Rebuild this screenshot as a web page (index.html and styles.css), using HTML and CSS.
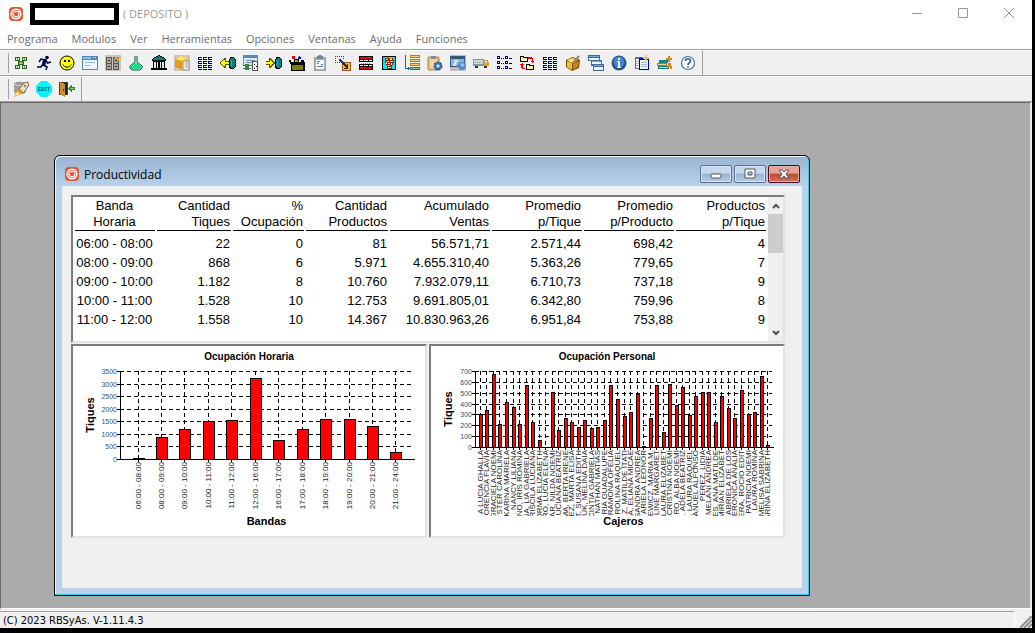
FILE: index.html
```html
<!DOCTYPE html>
<html lang="es">
<head>
    <meta charset="UTF-8">
    <meta name="viewport" content="width=device-width, initial-scale=1.0">
    <title>Productividad</title>
    <link rel="stylesheet" href="styles.css">
</head>
<body>
    <svg class="defs" aria-hidden="true">
        <symbol id="logo" viewBox="0 0 16 16">
            <rect x="1" y="1" width="14" height="14" rx="4" fill="#dd5a32"/>
            <circle cx="8" cy="8" r="4.800" fill="#e88060" stroke="#fff" stroke-width="1.500"/>
            <path d="M5 8l1.500-2.500h3L11 8l-1.500 2.500h-3z" fill="#dd5a32" stroke="#fff" stroke-width="1"/>
            <path d="M2 8h3M10 6l1.500-2.500M10 10l1.500 2.500" stroke="#f7d5c9"/>
        </symbol>
        <symbol id="grid" viewBox="0 0 16 16">
            <path d="M2 2h5v4H2zM9 2h5v4H9zM2 10h5v4H2zM9 10h5v4H9zM5 6h6v4H5z" fill="#2c6a26"/>
            <path d="M3 3h3v2H3zM10 3h3v2h-3zM3 11h3v2H3zM10 11h3v2h-3z" fill="#d5edc8"/>
            <path d="M4 3h1v2H4zM11 3h1v2h-1zM4 11h1v2H4zM11 11h1v2h-1zM6 7h4v2H6z" fill="#62a850"/>
            <path d="M7 7h2v2H7z" fill="#f7b84b"/>
        </symbol>
        <symbol id="cells" viewBox="0 0 16 16">
            <path d="M1 2h4v1H1zM6 2h4v1H6zM11 2h4v1h-4zM1 6h4v1H1zM6 6h4v1H6zM11 6h4v1h-4zM1 10h4v1H1zM6 10h4v1H6zM11 10h4v1h-4z" fill="#0000c8"/>
            <path d="M1 4h4v1H1zM6 4h4v1H6zM11 4h4v1h-4zM1 8h4v1H1zM6 8h4v1H6zM11 8h4v1h-4zM1 12h4v1H1zM6 12h4v1H6zM11 12h4v1h-4zM1 14h4v1H1zM6 14h4v1H6zM11 14h4v1h-4z"/>
            <path d="M1 2h1v3H1zM6 2h1v3H6zM11 2h1v3h-1zM1 6h1v3H1zM6 6h1v3H6zM11 6h1v3h-1zM1 10h1v3H1zM6 10h1v3H6zM11 10h1v3h-1z" fill="#000060"/>
        </symbol>
        <symbol id="cylinder" viewBox="0 0 8 12">
            <path d="M2 0h4v1h1v1h1v8H7v1H6v1H2v-1H1V2h1z"/>
            <path d="M3 1h3v1h1v8H6v1H3v-1H2V2h1z" fill="#008080"/>
            <path d="M3 3h1v6H3z" fill="#3ca8a0"/>
        </symbol>
        <symbol id="clipboard" viewBox="0 0 16 16">
            <rect x="2" y="2" width="12" height="14" rx="1" fill="#a89f8c"/>
            <rect x="3" y="3" width="10" height="12" fill="#9cb4d0"/>
            <rect x="4" y="5" width="8" height="9" fill="#f4f9ff"/>
            <path d="M5 1h1l1-1h2l1 1h1v3H5z" fill="#6e86a6"/>
            <path d="M5 6h3v1H5zM5 8h2v1H5zM5 11h6v1H5zM9 9h2v1H9z" fill="#5f7fa6"/>
        </symbol>
    </svg>

    <div class="app">
        <header class="titlebar">
            <svg class="icon"><use href="#logo"/></svg>
            <span class="redacted"></span>
            <span>( DEPOSITO )</span>
            <div class="window-controls">
                <button aria-label="Minimizar"><svg viewBox="0 0 10 10"><path d="M0 5.500h10"/></svg></button>
                <button aria-label="Maximizar"><svg viewBox="0 0 10 10"><path d="M.5.5h9v9h-9z"/></svg></button>
                <button aria-label="Cerrar"><svg viewBox="0 0 10 10"><path d="M0 0l10 10M10 0L0 10"/></svg></button>
            </div>
        </header>

        <nav class="menu">
            <a href="#">Programa</a>
            <a href="#">Modulos</a>
            <a href="#">Ver</a>
            <a href="#">Herramientas</a>
            <a href="#">Opciones</a>
            <a href="#">Ventanas</a>
            <a href="#">Ayuda</a>
            <a href="#">Funciones</a>
        </nav>

        <div class="toolbar-row">
            <div class="toolbar">
                <button aria-label="Modulos"><svg class="icon px"><use href="#grid"/></svg></button>
                <button aria-label="Ejecutar"><svg class="icon" viewBox="0 0 16 16"><circle cx="11" cy="2.500" r="1.800" fill="#000030"/><path d="M10 5L5 4 3 7M10 5l1.500 3 3.500-1M8 5l-1 5 4 2-1 3M7 9l-2 3H1" fill="none" stroke="#000040" stroke-width="1.500"/><path d="M7 4h3.500l-1 6H6z" fill="#000040"/></svg></button>
                <button aria-label="Clientes"><svg class="icon" viewBox="0 0 16 16"><circle cx="8" cy="8" r="7" fill="#ff0" stroke="#000"/><path d="M5 5h2v2H5zM9 5h2v2H9z"/><path d="M4 9.500c1 3.500 7 3.500 8 0" fill="none" stroke="#000"/></svg></button>
                <button aria-label="Ventana"><svg class="icon px" viewBox="0 0 16 16"><path d="M0 1h16v14H0z" fill="#5585b8"/><path d="M1 5h14v9H1z" fill="#eef6fd"/><path d="M1 2h8v2H1z" fill="#8fc0e8"/><path d="M11 2h1v1h-1zM13 2h1v1h-1z" fill="#fff"/><path d="M3 7h10v1H3zM3 10h5v1H3z" fill="#9ab6d4"/></svg></button>
                <button aria-label="Archivos"><svg class="icon px" viewBox="0 0 16 16"><path d="M0 0h16v16H0z" fill="#cac6c2"/><path d="M1 2h6v13H1zM8 2h6v13H8z" fill="#5e5854"/><path d="M2 3h4v5H2zM2 9h4v5H2zM9 3h4v5H9zM9 9h4v5H9z" fill="#aaa39e"/><path d="M3 5h2v1H3zM3 11h2v1H3zM10 5h2v1h-2zM10 11h2v1h-2z" fill="#4a2420"/><path d="M12 0h1v2h3v1h-2v3h-2V4h-2V2h2z" fill="#e8951e"/></svg></button>
                <button aria-label="Laboratorio"><svg class="icon" viewBox="0 0 16 16"><path d="M6 2h4M7 3v4L2 11v2l2 2h8l2-2v-2L9 7V3" fill="#e8fffc" stroke="#064848"/><path d="M6 8h4l4 4-2 2H4l-2-2z" fill="#17e085"/><path d="M5 10h1v1H5zM9 10h1v1H9z" fill="#b3ffdc"/></svg></button>
                <button aria-label="Banco"><svg class="icon px" viewBox="0 0 16 16"><path d="M7 0h2v1h2v1h2v1h1v1h1v2H1V4h1V3h1V2h2V1h2z"/><path d="M7 1h2v1h2v1h2v1h1v1H2V4h1V3h2V2h2z" fill="#008080"/><path d="M2 6h12v9H2z"/><path d="M3 7h2v6H3zM6 7h1v6H6zM9 7h1v6H9zM11 7h2v6h-2z" fill="#dfe9e9"/><path d="M0 13h16v2H0z"/></svg></button>
                <button aria-label="Articulos"><svg class="icon" viewBox="0 0 16 16"><path d="M0 0h16v16H0z" fill="#c9c3bb"/><path d="M1 4l6-3 7 2v3l-5 9-8-3z" fill="#e59c11"/><path d="M1 4l6-3 7 2-6 3z" fill="#ffe46e"/><path d="M8 6l6-3v11l-6 1z" fill="#f8c32d"/><path d="M9 6h6v9H9z" fill="#f5f2ed" stroke="#98928b"/><path d="M11 8h3M11 10h3M11 12h3" stroke="#a89c8d"/></svg></button>
                <button aria-label="Planilla"><svg class="icon px"><use href="#cells"/></svg></button>
                <button aria-label="Importar"><svg class="icon px" viewBox="0 0 16 16"><path d="M0 7h1V6h1V5h1V4h1V3h2v3h3v4H6v3H4v-1H3v-1H2v-1H1V9H0z" fill="#5a5400"/><path d="M1 7h1V6h1V5h2v2h4v2H5v2H3v-1H2V9H1z" fill="#ff0"/><use href="#cylinder" x="8" y="2" width="8" height="12"/></svg></button>
                <button aria-label="Depurar"><svg class="icon px" viewBox="0 0 16 16"><path d="M0 0h15v11H0z" fill="#6189af"/><path d="M1 3h13v7H1z" fill="#dbeaf7"/><path d="M3 5h9v1H3zM3 7h7v1H3z" fill="#6d8ead"/><path d="M2 9h4v6H2zM0 10h9v1H0zM0 13h8v1H0z" fill="#418047"/><path d="M9 6h6v10H9z" fill="#555"/><path d="M10 7h4v8h-4z" fill="#fff"/><path d="M11 9h1v1h-1zM13 11h1v1h-1zM11 13h1v1h-1z"/></svg></button>
                <button aria-label="Exportar"><svg class="icon px" viewBox="0 0 16 16"><path d="M0 6h3V3h2v1h1v1h1v1h1v1h1v2H8v1H7v1H6v1H5v1H3v-3H0z" fill="#5a5400"/><path d="M0 7h4V5h1v1h1v1h1v2H6v1H5v1H4V9H0z" fill="#ff0"/><use href="#cylinder" x="8" y="2" width="8" height="12"/></svg></button>
                <button aria-label="Caja"><svg class="icon px" viewBox="0 0 16 16"><path d="M1 7h15v9H2V9H1z"/><path d="M3 10h11v5H3z" fill="#808000"/><path d="M0 5h2v2H0zM2 7h3v1H2zM12 5h3v2h-3zM5 4h5v4H5z"/><path d="M3 1h3v3H3z" fill="#e00"/><path d="M10 1h1v1h1v2H9V2h1z" fill="#00f"/><path d="M6 5h3v2H6z" fill="#0e2"/><path d="M2 5h2v1H2zM10 6h2v1h-2z" fill="#fff"/></svg></button>
                <button aria-label="Portapapeles"><svg class="icon"><use href="#clipboard"/></svg></button>
                <button aria-label="Mover"><svg class="icon px" viewBox="0 0 16 16"><path d="M0 1h1v1H0zM2 1h1v1H2zM4 1h1v1H4zM6 1h1v1H6zM8 1h1v1H8zM0 3h1v1H0zM0 5h1v1H0zM0 7h1v1H0zM2 7h1v1H2zM4 7h1v1H4zM8 3h1v1H8z" fill="#444"/><path d="M7 7h9v9H7z" fill="#9e5a14"/><path d="M8 8h7v7H8z" fill="#f8b843"/><path d="M4 4h2v1h1v1h1v1h1v1h1v1h1v1h1V9h1v5H9v-1h2v-1h-1v-1H9v-1H8V9H7V8H6V7H5V6H4z" fill="#182b70"/></svg></button>
                <button aria-label="Filas"><svg class="icon px" viewBox="0 0 16 16"><path d="M1 1h14v6H1zM1 9h14v6H1z"/><path d="M2 2h12v2H2zM2 12h12v2H2z" fill="#ed0000"/><path d="M2 5h3v1H2zM6 5h4v1H6zM11 5h3v1h-3zM2 10h3v1H2zM6 10h4v1H6zM11 10h3v1h-3zM2 7h12v2H2z" fill="#fff"/><path d="M3 8h1v1H3zM5 8h1v1H5zM7 8h1v1H7zM9 8h1v1H9zM11 8h1v1h-1z" fill="#999"/></svg></button>
                <button aria-label="Canasta"><svg class="icon px" viewBox="0 0 16 16"><path d="M1 1h14v14H1z"/><path d="M2 2h12v12H2z" fill="#00e5ee"/><path d="M4 3h8v2h1v3h-1v2h-1v4H6v-4H5V8H4z" fill="#8f2a0c"/><path d="M5 4h2v1H5zM9 3h2v2H9zM6 6h2v1H6zM9 6h3v1H9zM5 7h1v2H5zM7 8h2v1H7zM10 8h1v2h-1zM7 10h2v1H7zM7 12h3v1H7z" fill="#ffdf39"/></svg></button>
                <button aria-label="Ordenar"><svg class="icon px" viewBox="0 0 16 16"><path d="M1 0h1v13h2v-1h1v1h1v1H5v1H4v-1H1z" fill="#315f8f"/><path d="M6 0h10v3H6zM6 4h10v3H6zM6 8h10v3H6z" fill="#b97b12"/><path d="M7 1h8v1H7zM7 5h8v1H7zM7 9h8v1H7z" fill="#ffd273"/><path d="M6 12h10v3H6z" fill="#3e7a36"/><path d="M7 13h8v1H7z" fill="#8cc47e"/></svg></button>
                <button aria-label="Configurar"><svg class="icon" viewBox="0 0 16 16"><rect x="1" y="2" width="11" height="13" rx="1" fill="#e7be80" stroke="#b18343"/><path d="M3 4h7v9H3z" fill="#f3d49f"/><path d="M4 1h5v3H4z" fill="#7890a8"/><circle cx="11" cy="11" r="4" fill="#5d91d2"/><circle cx="11" cy="11" r="3.500" fill="none" stroke="#1e4d8b" stroke-width="2" stroke-dasharray="2 1"/><circle cx="11" cy="11" r="1.200" fill="#e6f0fa"/></svg></button>
                <button aria-label="Red"><svg class="icon" viewBox="0 0 16 16"><path d="M0 0h16v16H0z" fill="#c0bdb8"/><path d="M0 1h15v11H0z" fill="#315a80"/><path d="M1 4h13v7H1z" fill="#86b4dc"/><path d="M3 11l2-6h3l-3 6" fill="#e8eef4"/><circle cx="12" cy="11" r="4" fill="#4f8bc6"/><path d="M10 9l3-1 2 3-3 1z" fill="#8ec4ec"/></svg></button>
                <button aria-label="Entregas"><svg class="icon px" viewBox="0 0 16 16"><path d="M0 4h11v7H0z" fill="#789a9b"/><path d="M1 5h9v4H1z" fill="#cbdedc"/><path d="M2 7h1v1H2zM4 7h1v1H4zM6 7h1v1H6zM8 7h1v1H8z" fill="#619795"/><path d="M11 5h4v2h1v4h-5z" fill="#d99b2d"/><path d="M12 6h2v2h-2z" fill="#e9eef0"/><path d="M2 11h3v2H2zM11 11h3v2h-3z" fill="#333"/></svg></button>
                <button aria-label="Lista"><svg class="icon px" viewBox="0 0 16 16"><path d="M1 1h3v3H1zM1 6h3v3H1zM1 11h3v3H1zM9 1h3v3H9zM9 6h3v3H9zM9 11h3v3H9z" fill="#000080"/><path d="M2 2h1v1H2zM2 7h1v1H2zM2 12h1v1H2zM10 2h1v1h-1zM10 7h1v1h-1zM10 12h1v1h-1z" fill="#fff"/><path d="M5 3h1v1H5zM7 3h1v1H7zM5 8h1v1H5zM7 8h1v1H7zM5 13h1v1H5zM7 13h1v1H7zM13 3h3v1h-3zM13 8h3v1h-3zM13 13h3v1h-3z"/></svg></button>
                <button aria-label="Transferir"><svg class="icon px" viewBox="0 0 16 16"><path d="M1 1h4v1h4v5H1zM7 9h4v1h4v5H7z"/><path d="M2 2h2v1h4v3H2zM8 10h2v1h4v3H8z" fill="#fff2a8"/><path d="M9 2h4v1h1v3h1v1h-1v1h-1V7h-1V6h1V4H9zM3 8h1v1h1v1H4v3h2v1H3v-1H2v-3H1V9h2z" fill="#f00000"/></svg></button>
                <button aria-label="Planilla 2"><svg class="icon px"><use href="#cells"/></svg></button>
                <button aria-label="Paquete"><svg class="icon" viewBox="0 0 16 16"><path d="M1 5l7-3 7 3-1 8-7 3-6-4z" fill="#6c4a0d"/><path d="M2 5l6-2 5 2-6 3z" fill="#ffe26b"/><path d="M2 6l5 2v7l-5-3z" fill="#f6bf28"/><path d="M8 8l6-2-1 6-5 3z" fill="#c98216"/><path d="M8 8l6-7" stroke="#a58055" stroke-width="2"/></svg></button>
                <button aria-label="Cascada"><svg class="icon px" viewBox="0 0 16 16"><path d="M0 0h12v6H0zM3 5h11v6H3zM5 9h11v7H5z" fill="#3d6b9c"/><path d="M1 3h10v2H1zM4 7h9v2H4zM6 12h9v3H6z" fill="#eaf4fd"/><path d="M1 1h10v1H1zM4 6h9v1H4zM6 10h9v1H6z" fill="#7fa9d2"/></svg></button>
                <button aria-label="Informacion"><svg class="icon" viewBox="0 0 16 16"><circle cx="8" cy="8" r="7.500" fill="#225496"/><circle cx="8" cy="7" r="5.500" fill="#4387c7"/><path d="M7 3h2v2H7zM6 6h3v6h1v1H6v-1h1V7H6z" fill="#fff"/></svg></button>
                <button aria-label="Nota"><svg class="icon px" viewBox="0 0 16 16"><path d="M1 2h12v12H1z" fill="#5a6ea6"/><path d="M2 4h10v9H2z" fill="#f4f7fb"/><path d="M2 6h10v1H2zM2 8h10v1H2zM2 10h10v1H2z" fill="#a7b8ca"/><path d="M5 3h10v12H5z" fill="#0000b8"/><path d="M6 5h8v9H6z" fill="#eef2fa"/><path d="M7 7h6v1H7zM7 9h6v1H7zM7 11h6v1H7z" fill="#a7b8ca"/><path d="M11 0h2v2h2v2h-2v2h-2V4H9V2h2z" fill="#e6c779"/></svg></button>
                <button aria-label="Libros"><svg class="icon px" viewBox="0 0 16 16"><path d="M2 5h9v3H2z" fill="#168883"/><path d="M0 8h10v3H0z" fill="#c07524"/><path d="M1 11h11v3H1z" fill="#226f75"/><path d="M11 1h2v2h2v2h-2v2h-2V5H9V3h2zM11 8h3v3h1v3h-2v-2h-2z" fill="#d58a20"/><path d="M1 9h8v1H1zM2 12h9v1H2z" fill="#e7d4ab"/></svg></button>
                <button aria-label="Ayuda"><svg class="icon" viewBox="0 0 16 16"><circle cx="8" cy="8" r="6.500" fill="#fff" stroke="#3c75a3" stroke-width="1.200"/><path d="M5.500 6c0-3 5-3 5 0 0 2-2.500 1.800-2.500 4M8 11.200v1.600" fill="none" stroke="#2c6392" stroke-width="1.700"/></svg></button>
            </div>
        </div>

        <div class="toolbar-row">
            <div class="toolbar">
                <button aria-label="Iniciar"><svg class="icon" viewBox="0 0 16 16"><path d="M1 3c0-3 12-3 12 0v8c-2 3-10 3-12 0z" fill="#9c9c98"/><path d="M1 3c2 2 9 2 12 0" fill="none" stroke="#deded9"/><path d="M6 8l5-6 4-1 .5 4-5 7z" fill="#f0e2c3" stroke="#93653a"/><path d="M5 8l5 4-4 2-5 2 2-5z" fill="#ef9a28"/><path d="M4 11l3 2-5 2z" fill="#fff0b0"/><circle cx="12" cy="5" r="1.300" fill="#6c8eaf"/></svg></button>
                <button aria-label="Editar"><svg class="icon" viewBox="0 0 16 16"><path d="M5 0h6l5 5v6l-5 5H5l-5-5V5z" fill="#00f4f8"/><text x="8" y="10" class="edit-text">EDIT</text></svg></button>
                <button aria-label="Salir"><svg class="icon px" viewBox="0 0 16 16"><path d="M0 1h9v13H0z" fill="#5d3b18"/><path d="M5 2h3v11H5z" fill="#10264e"/><path d="M1 1l5 2v13l-5-3z" fill="#cf8c32"/><path d="M4 8h1v2H4z" fill="#523110"/><path d="M9 7h1V6h1V5h1V4h1v2h3v3h-3v2h-1v-1h-1V9h-1V8H9z" fill="#3c7a28"/><path d="M11 7h4v1h-4z" fill="#8ad06a"/></svg></button>
            </div>
        </div>

        <main class="workspace">
            <section class="child-window">
                <div class="child-title">
                    <svg class="icon"><use href="#logo"/></svg>
                    <span>Productividad</span>
                    <div class="child-controls">
                        <button aria-label="Minimizar"><svg viewBox="0 0 12 12"><rect x="1" y="6" width="10" height="4" rx="1"/></svg></button>
                        <button aria-label="Restaurar"><svg viewBox="0 0 12 12"><path d="M1 1h10v9H1zM4 4h4v3H4z" fill-rule="evenodd"/></svg></button>
                        <button class="close" aria-label="Cerrar"><svg viewBox="0 0 12 12"><path d="M1 2h3l2 2 2-2h3L8 6l3 4H8L6 8l-2 2H1l3-4z"/></svg></button>
                    </div>
                </div>

                <div class="child-body">
                    <div class="panel data-panel">
                        <div class="table-wrap">
                            <table>
                                <colgroup>
                                    <col class="c-banda"><col class="c-tiques"><col class="c-ocup"><col class="c-prod">
                                    <col class="c-ventas"><col class="c-prom"><col class="c-prom"><col class="c-prom">
                                </colgroup>
                                <thead>
                                    <tr>
                                        <th>Banda<br>Horaria</th>
                                        <th>Cantidad<br>Tiques</th>
                                        <th>%<br>Ocupación</th>
                                        <th>Cantidad<br>Productos</th>
                                        <th>Acumulado<br>Ventas</th>
                                        <th>Promedio<br>p/Tique</th>
                                        <th>Promedio<br>p/Producto</th>
                                        <th>Productos<br>p/Tique</th>
                                    </tr>
                                </thead>
                                <tbody>
                                    <tr><td>06:00 - 08:00</td><td>22</td><td>0</td><td>81</td><td>56.571,71</td><td>2.571,44</td><td>698,42</td><td>4</td></tr>
                                    <tr><td>08:00 - 09:00</td><td>868</td><td>6</td><td>5.971</td><td>4.655.310,40</td><td>5.363,26</td><td>779,65</td><td>7</td></tr>
                                    <tr><td>09:00 - 10:00</td><td>1.182</td><td>8</td><td>10.760</td><td>7.932.079,11</td><td>6.710,73</td><td>737,18</td><td>9</td></tr>
                                    <tr><td>10:00 - 11:00</td><td>1.528</td><td>10</td><td>12.753</td><td>9.691.805,01</td><td>6.342,80</td><td>759,96</td><td>8</td></tr>
                                    <tr><td>11:00 - 12:00</td><td>1.558</td><td>10</td><td>14.367</td><td>10.830.963,26</td><td>6.951,84</td><td>753,88</td><td>9</td></tr>
                                </tbody>
                            </table>
                        </div>
                        <div class="scrollbar">
                            <button aria-label="Subir"><svg viewBox="0 0 8 6"><path d="M1 5l3-3 3 3"/></svg></button>
                            <div class="thumb"></div>
                            <button aria-label="Bajar"><svg viewBox="0 0 8 6"><path d="M1 1l3 3 3-3"/></svg></button>
                        </div>
                    </div>
                    <div class="charts">
                        <div class="panel"><svg class="chart" id="chart-bandas" viewBox="0 0 352 190"></svg></div>
                        <div class="panel"><svg class="chart" id="chart-cajeros" viewBox="0 0 352 190"></svg></div>
                    </div>
                </div>
            </section>
        </main>

        <footer class="statusbar">
            <div class="status-text">(C) 2023 RBSyAs. V-1.11.4.3</div>
            <svg class="size-grip" viewBox="0 0 12 12"><path d="M0 12L12 0M4 12l8-8M8 12l4-4"/></svg>
        </footer>
    </div>
    <script src="charts.js"></script>
</body>
</html>
```

FILE: styles.css
```css
* {
    box-sizing: border-box;
}
body {
    margin: 0;
    background: #000;
    font-family: "Open Sans", "Noto Sans", sans-serif;
    font-size: 11px;
}
button {
    margin: 0;
    padding: 0;
    border: none;
    background: none;
}
.defs {
    display: none;
}
.icon {
    display: block;
    width: 16px;
    height: 16px;
}
.px {
    shape-rendering: crispEdges;
}
.app {
    display: flex;
    flex-direction: column;
    min-height: 100vh;
    background: #f0f0f0;
    border-right: 3px solid #000;
    border-bottom: 5px solid #000;
}

/* main title and menu */
.titlebar {
    display: flex;
    align-items: center;
    height: 27px;
    padding-left: 8px;
    background: #fff;
    color: #999;
}
.redacted {
    width: 89px;
    height: 22px;
    margin: 0 4px 0 6px;
    border: 5px solid #000;
}
.window-controls {
    display: flex;
    margin-left: auto;
}
.window-controls button {
    width: 46px;
    height: 26px;
}
.window-controls svg {
    width: 10px;
    height: 10px;
    fill: none;
    stroke: #999;
}
.menu {
    display: flex;
    gap: 14px;
    height: 23px;
    padding: 0 7px;
    line-height: 24px;
    background: #fff;
    border-bottom: 1px solid #a0a0a0;
}
.menu a {
    color: #6d6d6d;
    text-decoration: none;
}

/* toolbars */
.toolbar-row {
    display: flex;
    border-top: 1px solid #fff;
    border-bottom: 1px solid #a0a0a0;
}
.toolbar {
    display: flex;
    padding: 0 2px 0 10px;
    border-right: 1px solid #a0a0a0;
    background: linear-gradient(#a0a0a0, #a0a0a0) 8px 2px / 1px 20px no-repeat;
}
.toolbar button {
    width: 23px;
    height: 24px;
    padding-left: 3px;
}
.edit-text {
    font: bold 5px "Liberation Mono", monospace;
    text-anchor: middle;
    fill: #004c60;
}

/* mdi area */
.workspace {
    position: relative;
    flex: 1;
    min-height: 507px;
    margin-right: 1px;
    background: #ababab;
    border: 1px solid #696969;
    border-right-color: #e3e3e3;
    border-bottom-color: #fff;
}
.child-window {
    position: absolute;
    top: 52px;
    left: 53px;
    width: 756px;
    padding: 0 6px 6px;
    background: linear-gradient(#99b4d1, #b9d1ea 30px);
    border: 1px solid #000;
    border-radius: 6px 6px 0 0;
    box-shadow: inset -1px -1px #2fd0ea, inset 1px 1px #f3f8fd;
}
.child-title {
    display: flex;
    align-items: center;
    height: 30px;
    padding: 6px 3px 0;
    gap: 4px;
    font-size: 12px;
}
.child-controls {
    display: flex;
    gap: 2px;
    margin-left: auto;
}
.child-controls button {
    display: flex;
    align-items: center;
    justify-content: center;
    width: 32px;
    height: 18px;
    border: 1px solid #5d6d94;
    border-radius: 2px;
    background: linear-gradient(#c5d8ec 45%, #98b3d0 50%, #b5cfe8);
    box-shadow: inset 0 0 0 1px #d6e4f2;
}
.child-controls .close {
    border-color: #4b1020;
    background: linear-gradient(#e3a398 45%, #bd4a28 50%, #cf7565);
    box-shadow: inset 0 0 0 1px #e6aba2;
}
.child-controls svg {
    width: 12px;
    height: 12px;
    fill: #fff;
    stroke: #50566b;
}
.child-body {
    margin: 0 1px 1px;
    padding: 9px 17px 50px 9px;
    background: #f0f0f0;
}
.panel {
    background: #fff;
    border: 2px solid;
    border-color: #7b7b7b #e3e3e3 #e3e3e3 #7b7b7b;
}
.data-panel {
    display: flex;
    height: 148px;
}

/* data */
.table-wrap {
    flex: 1;
}
table {
    width: 100%;
    table-layout: fixed;
    border-spacing: 2px 0;
    font-family: "Liberation Sans", Arial, sans-serif;
    font-size: 13px;
    color: #000;
}
th,
td {
    padding: 0 1px 0 0;
    text-align: right;
    white-space: nowrap;
    line-height: 19px;
}
th {
    padding-top: 1px;
    font-weight: normal;
    line-height: 16px;
    border-bottom: 1px solid #000;
}
th:first-child,
td:first-child {
    text-align: center;
}
tbody::before {
    content: "";
    display: block;
    height: 3px;
}
.c-banda { width: 80px; }
.c-tiques { width: 74px; }
.c-ocup { width: 71px; }
.c-prod { width: 82px; }
.c-ventas { width: 100px; }
.c-prom { width: 90px; }
.scrollbar {
    display: flex;
    flex-direction: column;
    width: 16px;
    background: #f0f0f0;
}
.scrollbar button {
    display: flex;
    align-items: center;
    justify-content: center;
    height: 17px;
}
.scrollbar button:last-child {
    margin-top: auto;
}
.scrollbar svg {
    width: 8px;
    height: 6px;
    fill: none;
    stroke: #505050;
    stroke-width: 2;
}
.thumb {
    height: 39px;
    background: #cdcdcd;
}

/* charts */
.charts {
    display: grid;
    grid-template-columns: 1fr 1fr;
    gap: 2px;
    margin-top: 1px;
}
.chart {
    display: block;
    width: 100%;
    font-family: "Liberation Sans", Arial, sans-serif;
}
.chart line,
.chart rect {
    stroke: #000;
    shape-rendering: crispEdges;
}
.chart rect {
    fill: #f00;
}
.chart .grid-line {
    stroke-dasharray: 4 3;
}
.chart .title {
    font-size: 10px;
    font-weight: bold;
    text-anchor: middle;
}
.chart .axis-title {
    font-size: 11px;
    font-weight: bold;
    text-anchor: middle;
}
.chart .tick {
    font-size: 7px;
    text-anchor: end;
    fill: #2b5672;
}
.chart .category {
    font-size: 8px;
    text-anchor: end;
    fill: #222;
}

/* status bar */
.statusbar {
    display: flex;
    height: 19px;
    padding-top: 2px;
}
.status-text {
    flex: 1;
    padding-left: 3px;
    line-height: 17px;
    font-family: "DejaVu Sans Condensed", "DejaVu Sans", sans-serif;
    border-top: 1px solid #a0a0a0;
    border-right: 1px solid #fff;
}
.size-grip {
    width: 12px;
    height: 12px;
    margin-left: 5px;
    align-self: flex-end;
    stroke: #909090;
    stroke-width: 2;
}
```

FILE: charts.js
```js
const bandas = [
    ['06:00 - 08:00', 22], ['08:00 - 09:00', 868], ['09:00 - 10:00', 1182], ['10:00 - 11:00', 1528],
    ['11:00 - 12:00', 1558], ['12:00 - 16:00', 3230], ['16:00 - 17:00', 750], ['17:00 - 18:00', 1200],
    ['18:00 - 19:00', 1600], ['19:00 - 20:00', 1600], ['20:00 - 21:00', 1310], ['21:00 - 24:00', 280]
];

const cajeros = [
    ['A LUCIA GHALLA', 304], ['ORENCIA FLAVIA', 341], ['GRACIELA NOEMI', 672], ['STER CAROLINA', 212],
    ['KARINA MARIELA', 414], ['. NANCY LILIANA', 368], ['NO, IRIS ROMINA', 212], ['NA, LIA GABRIELA', 571],
    ['RISCILA LUCIANA', 230], ['ORMA ELIZABETH', 64], ['RO, LUCIA ELENA', 0], ['AR, NILDA NOEMI', 506],
    ['LUCIANA BEATRIZ', 157], ['MA, BERTA IRENE', 267], ['EZ, MARTA ELISA', 230], ['T, SUSANA EDITH', 184],
    ['UK, MELINA DAIA', 249], ['CINTIA GABRIELA', 175], ['NATHAN MATIAS', 184], ['RIA GUADALUPE', 249],
    ['RAMONA OFELIA', 571], ['ROLINA RAQUEL', 442], ['Z, MATILDE ITATI', 285], ['IA, ELIANA MICAE', 322],
    ['SANDRA ANDREA', 488], ['ARIELA LEONOR', 5], ['EWICZ, MARIA M.', 267], ['LINE MARGARET', 571],
    ['LAURA ELIZABET', 138], ['CRISTINA NOEMI', 580], ['RO, ALBA NOEMI', 387], ['. ADELA BEATRIZ', 553],
    ['. LAURA RAQUEL', 295], ['ANUEL ALFONSO', 470], ['PEREZ, LIDIA', 506], ['MELANI ANDREA', 506],
    ['ES, ANA MATILDE', 230], ['MIRIAN ELIZABET', 470], ['ABRIELA DE LOS', 359], ['ERONICA ANALIA', 267],
    ['ERA, ROCIO EDIT', 525], ['PATRICIA NOEMI', 304], ['LAURA ROMINA', 322], ['MELISA SABRINA', 654],
    ['ARINA ELIZABETH', 18]
];

function drawChart(id, o) {
    const top = 25;
    const step = (o.right - o.left) / (o.data.length + 0.5);
    const y = v => Math.round(o.bottom - v / o.max * (o.bottom - top));
    let out = '';
    let labels = '';

    for (let v = 0; v <= o.max; v += o.tick) {
        if (v > 0) {
            out += `<line class="grid-line" x1="${o.left}" x2="${o.right}" y1="${y(v)}" y2="${y(v)}"/>`;
        }
        out += `<line x1="${o.left - 3}" x2="${o.left}" y1="${y(v)}" y2="${y(v)}"/>`;
        out += `<text class="tick" x="${o.left - 3}" y="${y(v) + 3}">${v}</text>`;
    }

    o.data.forEach(([name, value], i) => {
        const x = Math.round(o.left + step * (i + 0.75));
        out += `<line class="grid-line" x1="${x}" x2="${x}" y1="${top}" y2="${o.bottom}"/>`;
        out += `<line x1="${x}" x2="${x}" y1="${o.bottom}" y2="${o.bottom + 3}"/>`;
        if (value > 0) {
            out += `<rect x="${x - (o.bar - 1) / 2}" y="${y(value)}" width="${o.bar}" height="${o.bottom - y(value)}"/>`;
        }
        labels += `<text class="category" transform="translate(${x + 3} ${o.bottom + 3}) rotate(-90)">${name}</text>`;
    });

    // long names are cut off above the axis title
    out += `<svg width="352" height="170">${labels}</svg>`;
    out += `<line x1="${o.left}" x2="${o.left}" y1="${top}" y2="${o.bottom}"/>`;
    out += `<line x1="${o.left}" x2="${o.right + 2}" y1="${o.bottom}" y2="${o.bottom}"/>`;
    out += `<text class="title" x="176" y="14">${o.title}</text>`;
    out += `<text class="axis-title" x="${(o.left + o.right) / 2}" y="179">${o.xTitle}</text>`;
    out += `<text class="axis-title" transform="translate(21 ${(top + o.bottom) / 2}) rotate(-90)">Tiques</text>`;
    document.getElementById(id).innerHTML = out;
}

drawChart('chart-bandas', {
    data: bandas, max: 3500, tick: 500, left: 47, right: 340, bottom: 113, bar: 11,
    title: 'Ocupación Horaria', xTitle: 'Bandas'
});
drawChart('chart-cajeros', {
    data: cajeros, max: 700, tick: 100, left: 44, right: 341, bottom: 101, bar: 3,
    title: 'Ocupación Personal', xTitle: 'Cajeros'
});
```
